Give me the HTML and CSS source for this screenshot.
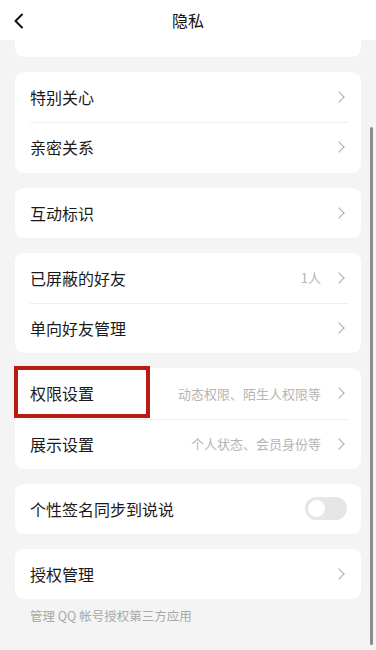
FILE: index.html
```html
<!DOCTYPE html>
<html lang="zh">

<head>
    <meta charset="UTF-8">
    <meta name="viewport" content="width=device-width, initial-scale=1.0">
    <title>隐私</title>
    <link rel="stylesheet" href="styles.css">
</head>

<body>
    <div class="header">
        <svg class="back" width="12" height="16" viewBox="0 0 12 16">
            <polyline points="9,1.5 2.5,8 9,14.5" fill="none" stroke="#111" stroke-width="2" stroke-linecap="round" stroke-linejoin="round"/>
        </svg>
        <div class="title">隐私</div>
    </div>

    <div class="page">
        <div class="card card-cut"></div>

        <div class="card">
            <div class="row"><span class="label">特别关心</span><span class="arrow"></span></div>
            <div class="row"><span class="label">亲密关系</span><span class="arrow"></span></div>
        </div>

        <div class="card">
            <div class="row"><span class="label">互动标识</span><span class="arrow"></span></div>
        </div>

        <div class="card">
            <div class="row"><span class="label">已屏蔽的好友</span><span class="value">1人</span><span class="arrow"></span></div>
            <div class="row"><span class="label">单向好友管理</span><span class="arrow"></span></div>
        </div>

        <div class="card">
            <div class="row">
                <span class="label">权限设置</span><span class="value">动态权限、陌生人权限等</span><span class="arrow"></span>
                <div class="mark"></div>
            </div>
            <div class="row"><span class="label">展示设置</span><span class="value">个人状态、会员身份等</span><span class="arrow"></span></div>
        </div>

        <div class="card">
            <div class="row"><span class="label">个性签名同步到说说</span><span class="switch"></span></div>
        </div>

        <div class="card">
            <div class="row"><span class="label">授权管理</span><span class="arrow"></span></div>
        </div>
        <div class="note">管理 QQ 帐号授权第三方应用</div>
    </div>

    <div class="scrollbar"></div>
</body>

</html>
```

FILE: styles.css
```css
body {
    margin: 0;
    background-color: #f4f4f4;
    font-family: "Noto Sans CJK SC", "Noto Sans", sans-serif;
    color: #1a1a1a;
    height: 650px;
    overflow: hidden;
}

.header {
    height: 40px;
    background-color: #fff;
    display: flex;
    align-items: center;
    justify-content: center;
    position: relative;
}

.back {
    position: absolute;
    left: 13px;
    top: 13px;
}

.title {
    font-size: 16px;
    color: #111;
}

.page {
    padding: 0 15px;
    display: flex;
    flex-direction: column;
    gap: 15px;
}

.card {
    background-color: #fff;
    border-radius: 9px;
}

.card-cut {
    height: 17px;
    border-radius: 0 0 9px 9px;
}

.row {
    height: 50.25px;
    display: flex;
    align-items: center;
    padding: 0 16px 0 15px;
    position: relative;
}

.row + .row::before {
    content: "";
    position: absolute;
    top: 0;
    left: 15px;
    right: 13px;
    border-top: 1px solid #efefef;
}

.label {
    flex: 1;
    font-size: 16px;
}

.value {
    font-size: 13px;
    color: #b5b5b5;
    margin-right: 14px;
}

.arrow {
    width: 7px;
    height: 7px;
    border-right: 1.3px solid #aaa;
    border-top: 1.3px solid #aaa;
    transform: rotate(45deg);
    margin-right: 2px;
}

.switch {
    width: 42px;
    height: 23px;
    border-radius: 12px;
    background-color: #e6e6e6;
    position: relative;
    margin-right: -2px;
}

.switch::after {
    content: "";
    position: absolute;
    left: 3px;
    top: 3px;
    width: 17px;
    height: 17px;
    border-radius: 50%;
    background-color: #fff;
}

.mark {
    position: absolute;
    left: -1px;
    top: -2px;
    width: 128px;
    height: 44px;
    border: 4px solid #b81c12;
}

.note {
    margin-top: -8px;
    padding-left: 15px;
    font-size: 12.5px;
    color: #a8a8a8;
}

.scrollbar {
    position: absolute;
    left: 370px;
    top: 127px;
    width: 2.5px;
    height: 518px;
    border-radius: 2px;
    background-color: #8c8c8c;
}
```
